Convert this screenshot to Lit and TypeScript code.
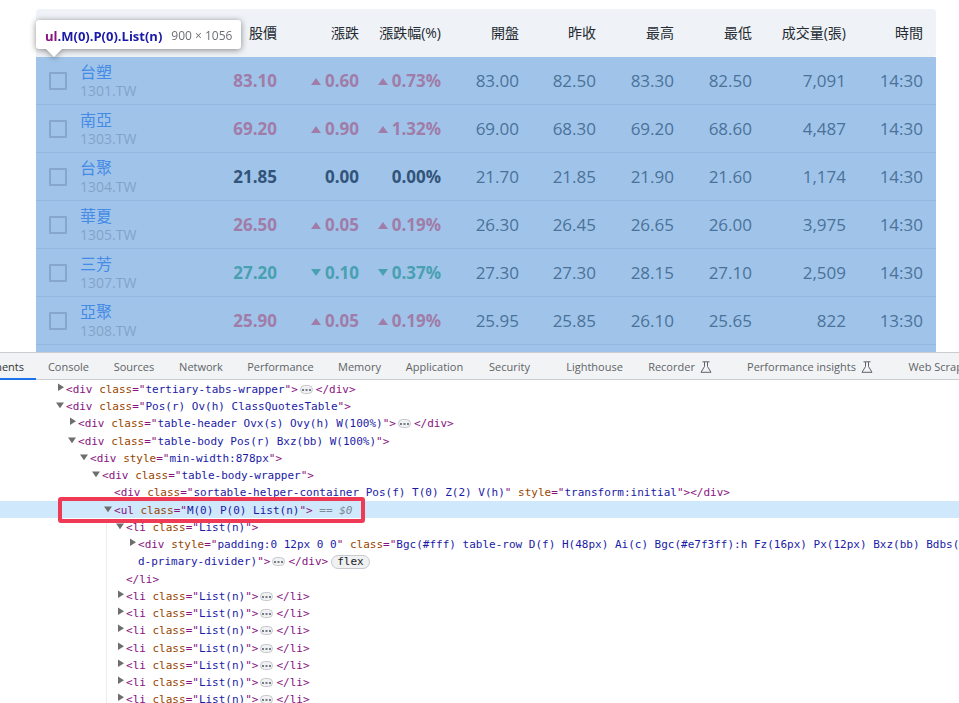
import { LitElement, html, css, svg, nothing, TemplateResult } from "lit";
import { customElement } from "lit/decorators.js";
import { classMap } from "lit/directives/class-map.js";
import { styleMap } from "lit/directives/style-map.js";

type Trend = "up" | "down" | "flat";

interface Quote {
  name: string;
  code: string;
  trend: Trend;
  price: string;
  change: string;
  percent: string;
  rest: string[];
}

const COLUMNS = [
  { label: "股價", width: 82 },
  { label: "漲跌", width: 82 },
  { label: "漲跌幅(%)", width: 82 },
  { label: "開盤", width: 78 },
  { label: "昨收", width: 77 },
  { label: "最高", width: 78 },
  { label: "最低", width: 78 },
  { label: "成交量(張)", width: 94 },
  { label: "時間", width: 90 },
];

const QUOTES: Quote[] = [
  { name: "台塑", code: "1301.TW", trend: "up", price: "83.10", change: "0.60", percent: "0.73%", rest: ["83.00", "82.50", "83.30", "82.50", "7,091", "14:30"] },
  { name: "南亞", code: "1303.TW", trend: "up", price: "69.20", change: "0.90", percent: "1.32%", rest: ["69.00", "68.30", "69.20", "68.60", "4,487", "14:30"] },
  { name: "台聚", code: "1304.TW", trend: "flat", price: "21.85", change: "0.00", percent: "0.00%", rest: ["21.70", "21.85", "21.90", "21.60", "1,174", "14:30"] },
  { name: "華夏", code: "1305.TW", trend: "up", price: "26.50", change: "0.05", percent: "0.19%", rest: ["26.30", "26.45", "26.65", "26.00", "3,975", "14:30"] },
  { name: "三芳", code: "1307.TW", trend: "down", price: "27.20", change: "0.10", percent: "0.37%", rest: ["27.30", "27.30", "28.15", "27.10", "2,509", "14:30"] },
  { name: "亞聚", code: "1308.TW", trend: "up", price: "25.90", change: "0.05", percent: "0.19%", rest: ["25.95", "25.85", "26.10", "25.65", "822", "13:30"] },
];

@customElement("quote-table")
export class QuoteTable extends LitElement {
  static styles = css`
    :host { display: block; }
    .table {
      width: 100%;
      table-layout: fixed;
      border-collapse: separate;
      border-spacing: 0;
      font: 17px/24px "Open Sans", "Noto Sans CJK TC", sans-serif;
      color: #4a7299;
    }
    .head {
      height: 48px;
      box-sizing: border-box;
      padding: 0;
      background: #eff2f6;
      text-align: right;
      font: 14px/20px "Open Sans", "Noto Sans CJK TC", sans-serif;
      color: #232a31;
    }
    .head:first-child { border-radius: 4px 0 0 0; }
    .head:last-child { border-radius: 0 4px 4px 0; }
    .cell {
      height: 48px;
      box-sizing: border-box;
      padding: 0;
      background: #a0c4e9;
      border-bottom: 1px solid #93b7de;
      text-align: right;
      font-weight: 400;
    }
    .head:last-child, .cell:last-child { padding-right: 13px; }
    .stock {
      display: flex;
      align-items: center;
      gap: 13px;
      padding-left: 13px;
      text-align: left;
    }
    .check {
      appearance: none;
      flex: none;
      box-sizing: border-box;
      width: 18px;
      height: 18px;
      margin: 0;
      border: 2px solid #86a6cb;
      border-radius: 1px;
    }
    .label { display: block; }
    .name {
      display: block;
      font-size: 16px;
      line-height: 20px;
      color: #458be6;
      text-decoration: none;
    }
    .code {
      display: block;
      font-size: 14px;
      line-height: 18px;
      color: #82a3c8;
    }
    .strong { font-weight: 700; }
    .up { color: #a07ca8; }
    .down { color: #48a0b1; }
    .flat { color: #33547a; }
    .mark {
      width: 10px;
      height: 8px;
      margin-right: 4px;
      vertical-align: 2px;
      fill: currentColor;
    }
  `;

  private mark(trend: Trend) {
    if (trend === "flat") return nothing;
    const d = trend === "up" ? "M0 8L5 1L10 8Z" : "M0 0L5 7L10 0Z";
    return html`<svg class="mark" viewBox="0 0 10 8" aria-hidden="true">${svg`<path d=${d}/>`}</svg>`;
  }

  render() {
    return html`
      <table class="table">
        <colgroup>
          <col />
          ${COLUMNS.map((c) => html`<col style=${styleMap({ width: `${c.width}px` })} />`)}
        </colgroup>
        <thead>
          <tr>
            <th class="head" scope="col"></th>
            ${COLUMNS.map((c) => html`<th class="head" scope="col">${c.label}</th>`)}
          </tr>
        </thead>
        <tbody>
          ${QUOTES.map((q) => {
            const strong = { cell: true, strong: true, [q.trend]: true };
            return html`<tr>
              <th class="cell" scope="row">
                <div class="stock">
                  <input class="check" type="checkbox" aria-labelledby="s${q.code}" />
                  <span class="label" id="s${q.code}">
                    <a class="name" href="#">${q.name}</a><span class="code">${q.code}</span>
                  </span>
                </div>
              </th>
              <td class=${classMap(strong)}>${q.price}</td>
              <td class=${classMap(strong)}>${this.mark(q.trend)}${q.change}</td>
              <td class=${classMap(strong)}>${this.mark(q.trend)}${q.percent}</td>
              ${q.rest.map((v) => html`<td class="cell">${v}</td>`)}
            </tr>`;
          })}
        </tbody>
      </table>
    `;
  }
}

interface Line {
  depth: number;
  arrow?: "open" | "closed";
  tag?: string;
  attrs?: [string, string][];
  /** Text that continues an attribute value wrapped from the line above. */
  tail?: string;
  wraps?: boolean;
  folded?: boolean;
  close?: string;
  badge?: string;
  selected?: boolean;
  guide?: boolean;
}

const item = (): Line => ({ depth: 5, arrow: "closed", tag: "li", attrs: [["class", "List(n)"]], folded: true, close: "li", guide: true });

const LINES: Line[] = [
  { depth: 0, arrow: "closed", tag: "div", attrs: [["class", "tertiary-tabs-wrapper"]], folded: true, close: "div" },
  { depth: 0, arrow: "open", tag: "div", attrs: [["class", "Pos(r) Ov(h) ClassQuotesTable"]] },
  { depth: 1, arrow: "closed", tag: "div", attrs: [["class", "table-header Ovx(s) Ovy(h) W(100%)"]], folded: true, close: "div" },
  { depth: 1, arrow: "open", tag: "div", attrs: [["class", "table-body Pos(r) Bxz(bb) W(100%)"]] },
  { depth: 2, arrow: "open", tag: "div", attrs: [["style", "min-width:878px"]] },
  { depth: 3, arrow: "open", tag: "div", attrs: [["class", "table-body-wrapper"]] },
  { depth: 4, tag: "div", attrs: [["class", "sortable-helper-container Pos(f) T(0) Z(2) V(h)"], ["style", "transform:initial"]], close: "div" },
  { depth: 4, arrow: "open", tag: "ul", attrs: [["class", "M(0) P(0) List(n)"]], selected: true },
  { depth: 5, arrow: "open", tag: "li", attrs: [["class", "List(n)"]], guide: true },
  { depth: 6, arrow: "closed", tag: "div", attrs: [["style", "padding:0 12px 0 0"], ["class", "Bgc(#fff) table-row D(f) H(48px) Ai(c) Bgc(#e7f3ff):h Fz(16px) Px(12px) Bxz(bb) Bdbs(s)"]], wraps: true, guide: true },
  { depth: 6, tail: "d-primary-divider)", folded: true, close: "div", badge: "flex", guide: true },
  { depth: 5, close: "li", guide: true },
  item(), item(), item(), item(), item(), item(), item(),
];

interface Tab {
  label: string;
  width: number;
  flask?: boolean;
  active?: boolean;
}

const TABS: Tab[] = [
  { label: "Elements", width: 36, active: true },
  { label: "Console", width: 65 },
  { label: "Sources", width: 66 },
  { label: "Network", width: 68 },
  { label: "Performance", width: 91 },
  { label: "Memory", width: 67 },
  { label: "Application", width: 83 },
  { label: "Security", width: 67 },
  { label: "Lighthouse", width: 103 },
  { label: "Recorder", width: 68, flask: true },
  { label: "Performance insights", width: 192, flask: true },
  { label: "Web Scraper", width: 70 },
];

@customElement("dev-tools")
export class DevTools extends LitElement {
  static styles = css`
    :host {
      display: block;
      overflow: hidden;
      background: #fff;
      border-top: 1px solid #cacdd1;
    }
    .tabs {
      display: flex;
      height: 26px;
      background: #f1f3f4;
      border-bottom: 1px solid #cacdd1;
    }
    .tab {
      display: flex;
      flex: none;
      align-items: center;
      justify-content: center;
      gap: 5px;
      height: 27px;
      box-sizing: border-box;
      padding: 2px 0 0;
      border: 0;
      border-bottom: 2px solid transparent;
      background: none;
      white-space: nowrap;
      font: 11px/16px "Open Sans", sans-serif;
      color: #5f6368;
    }
    .active {
      justify-content: flex-end;
      overflow: hidden;
      padding-right: 12px;
      border-bottom-color: #1a73e8;
      color: #333;
    }
    .flask {
      flex: none;
      width: 12px;
      height: 12px;
      fill: none;
      stroke: #5f6368;
    }
    .tree {
      margin: 0;
      padding: 0;
      list-style: none;
      font: 11px/15px "DejaVu Sans Mono", monospace;
      color: #881280;
    }
    .line {
      position: relative;
      display: flex;
      align-items: center;
      box-sizing: border-box;
      height: 17px;
      padding-top: 2px;
      white-space: pre;
    }
    .line:nth-child(4n) { margin-top: 1px; }
    .selected { background: #cfe8fc; }
    .guide::before {
      content: "";
      position: absolute;
      left: 106px;
      top: -1px;
      bottom: 0;
      border-left: 1px solid #ececec;
    }
    .fold {
      flex: none;
      display: flex;
      width: 10px;
      height: 15px;
      padding: 0;
      border: 0;
      background: none;
    }
    .arrow {
      width: 10px;
      height: 15px;
      fill: #6e6e6e;
    }
    .attr { color: #994500; }
    .value { color: #1a1aa6; }
    .more {
      display: flex;
      flex: none;
      align-items: center;
      justify-content: center;
      box-sizing: border-box;
      width: 13px;
      height: 9px;
      margin: 0 3px 0 2px;
      padding: 0;
      border: 1px solid #c6c9cd;
      border-radius: 5px;
      background: #eff1f3;
    }
    .dots { width: 9px; height: 2px; fill: #777c82; }
    .badge {
      box-sizing: border-box;
      height: 14px;
      margin-left: 3px;
      padding: 0 5px;
      border: 1px solid #c6c9cd;
      border-radius: 7px;
      background: #eff1f3;
      line-height: 12px;
      color: #222;
    }
    .ref { color: #7d8a99; font-style: italic; }
    .frame {
      position: absolute;
      z-index: 1;
      left: 58px;
      top: -4px;
      width: 307px;
      height: 26px;
      box-sizing: border-box;
      border: 4px solid #ee3a54;
      border-radius: 3px;
      pointer-events: none;
    }
  `;

  private tab(t: Tab): TemplateResult {
    return html`<button
      class=${classMap({ tab: true, active: !!t.active })}
      role="tab"
      aria-selected=${t.active ? "true" : "false"}
      style=${styleMap({ width: `${t.width}px` })}
    >${t.label}${t.flask
      ? html`<svg class="flask" viewBox="0 0 12 12" aria-hidden="true"><path d="M2.500 .8H9.500M4.500 1V5.500L1 11.300H11L7.500 5.500V1"/></svg>`
      : nothing}</button>`;
  }

  private arrow(state?: "open" | "closed") {
    if (!state) return html`<span class="fold"></span>`;
    const d = state === "open" ? "M0 3.500H8L4 9.200Z" : "M2 1.400V9L8 5.200Z";
    return html`<button class="fold" aria-label=${state === "open" ? "Collapse" : "Expand"}>
      <svg class="arrow" viewBox="0 0 10 15"><path d=${d}/></svg></button>`;
  }

  private line(l: Line): TemplateResult {
    const attrs = (l.attrs ?? []).map(([k, v], i, all) => {
      const end = l.wraps && i === all.length - 1 ? "" : '"';
      return html`<span> </span><span class="attr">${k}</span><span>="</span><span class="value">${v}</span><span>${end}</span>`;
    });
    const open = l.tag ? html`<span>&lt;${l.tag}</span>${attrs}${l.wraps ? nothing : html`<span>&gt;</span>`}` : nothing;
    const tail = l.tail ? html`<span class="value">${l.tail}</span><span>"&gt;</span>` : nothing;
    const more = l.folded
      ? html`<button class="more" aria-label="Expand"><svg class="dots" viewBox="0 0 9 2"><path d="M0 0h2v2H0zM3.500 0h2v2h-2zM7 0h2v2H7z"/></svg></button>`
      : nothing;
    return html`<li
      class=${classMap({ line: true, selected: !!l.selected, guide: !!l.guide })}
      style=${styleMap({ paddingLeft: `${56 + l.depth * 12}px` })}
    >${this.arrow(l.arrow)}${open}${tail}${more}${l.close ? html`<span>&lt;/${l.close}&gt;</span>` : nothing}${l.badge
      ? html`<span class="badge">${l.badge}</span>`
      : nothing}${l.selected ? html`<span class="ref"> == $0</span><span class="frame"></span>` : nothing}</li>`;
  }

  render() {
    return html`
      <div class="tabs" role="tablist">${TABS.map((t) => this.tab(t))}</div>
      <ul class="tree">${LINES.map((l) => this.line(l))}</ul>
    `;
  }
}

@customElement("app-root")
export class AppRoot extends LitElement {
  static styles = css`
    :host {
      display: flex;
      flex-direction: column;
      height: 100vh;
      overflow: hidden;
      background: #fff;
    }
    .page {
      position: relative;
      display: flex;
      flex: 1;
      flex-direction: column;
      min-height: 0;
      overflow: hidden;
      padding: 9px 23px 0 36px;
    }
    .quotes { flex: none; }
    .fill { flex: 1; background: #a0c4e9; }
    .tools { flex: 0 0 350px; }
    .tip {
      position: absolute;
      left: 36px;
      top: 20px;
      display: flex;
      align-items: center;
      gap: 9px;
      height: 29px;
      box-sizing: border-box;
      padding: 2px 9px 0;
      border-radius: 3px;
      background: #fff;
      filter: drop-shadow(0 1px 3px rgba(0, 0, 0, 0.45));
      font: 12px/16px "Open Sans", sans-serif;
      white-space: nowrap;
      color: #6b6f74;
    }
    .tip::after {
      content: "";
      position: absolute;
      left: 10px;
      top: 29px;
      border: 8px solid transparent;
      border-top-color: #fff;
      border-bottom: 0;
    }
    .selector { font-size: 13px; font-weight: 700; color: #1a1aa6; }
    .tag { color: #881280; }
  `;

  render() {
    return html`
      <main class="page">
        <quote-table class="quotes"></quote-table>
        <div class="fill"></div>
        <div class="tip" role="tooltip">
          <span class="selector"><span class="tag">ul</span>.M(0).P(0).List(n)</span>
          <span>900 × 1056</span>
        </div>
      </main>
      <dev-tools class="tools"></dev-tools>
    `;
  }
}
